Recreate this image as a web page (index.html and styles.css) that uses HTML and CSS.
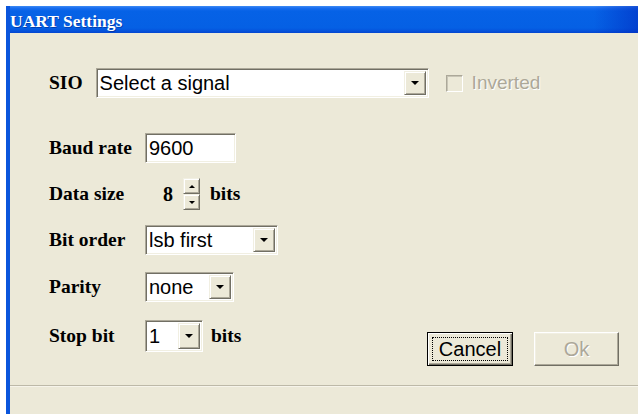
FILE: index.html
```html
<!DOCTYPE html>
<html>
<head>
<meta charset="utf-8">
<title>UART Settings</title>
<link rel="stylesheet" href="styles.css">
</head>
<body>
<div class="window">
  <div class="titlebar"><span class="title">UART Settings</span></div>
  <div class="client">
    <div class="sio-row">
      <span class="label label-sio">SIO</span>
      <div class="combo combo-sio">
        <span class="combo-text">Select a signal</span>
        <span class="combo-btn"><span class="arrow"></span></span>
      </div>
      <div class="check disabled">
        <span class="check-box"></span>
        <span class="check-text">Inverted</span>
      </div>
    </div>

    <div class="form">
      <div class="row">
        <span class="label">Baud rate</span>
        <div class="field field-baud">9600</div>
      </div>
      <div class="row">
        <span class="label">Data size</span>
        <span class="value">8</span>
        <span class="spin">
          <span class="spin-btn"><span class="arrow arrow-up"></span></span>
          <span class="spin-btn"><span class="arrow arrow-small"></span></span>
        </span>
        <span class="unit">bits</span>
      </div>
      <div class="row">
        <span class="label">Bit order</span>
        <div class="combo combo-order">
          <span class="combo-text">lsb first</span>
          <span class="combo-btn"><span class="arrow"></span></span>
        </div>
      </div>
      <div class="row row-parity">
        <span class="label">Parity</span>
        <div class="combo combo-parity">
          <span class="combo-text">none</span>
          <span class="combo-btn"><span class="arrow"></span></span>
        </div>
      </div>
      <div class="row row-stop">
        <div class="stop-field">
          <span class="label">Stop bit</span>
          <div class="combo combo-stop">
            <span class="combo-text">1</span>
            <span class="combo-btn"><span class="arrow"></span></span>
          </div>
          <span class="unit unit-stop">bits</span>
        </div>
        <div class="buttons">
          <button class="btn btn-default"><span class="focus">Cancel</span></button>
          <button class="btn" disabled>Ok</button>
        </div>
      </div>
    </div>
  </div>
  <div class="statusbar"></div>
</div>
</body>
</html>
```

FILE: styles.css
```css
html, body {
  margin: 0;
  padding: 0;
  background: #ffffff;
}

body {
  padding: 6px 0 0 6px;
  width: 638px;
  height: 414px;
  box-sizing: border-box;
  overflow: hidden;
}

.window {
  width: 632px;
  height: 408px;
  display: flex;
  flex-direction: column;
  background: #ece9d8;
  border-left: 4px solid #0a55dc;
  box-sizing: border-box;
}

/* title bar */
.titlebar {
  height: 27px;
  flex: none;
  display: flex;
  align-items: center;
  padding-left: 0;
  background:
    linear-gradient(to right, rgba(0, 40, 190, 0) 0, rgba(0, 40, 190, 0) 93%, rgba(0, 40, 190, 0.55) 100%),
    linear-gradient(to bottom, #3f8cf3 0, #1a6ef0 2px, #0662e6 5px, #0560e4 22px, #0452db 25px, #0346d0 27px);
}

.title {
  font-family: "Liberation Serif", serif;
  font-weight: bold;
  font-size: 17.5px;
  color: #ffffff;
  text-shadow: 1px 1px 0 rgba(0, 20, 110, 0.45);
  margin-top: 4px;
}

/* dialog client area */
.client {
  flex: 1;
  display: flex;
  flex-direction: column;
  padding: 35px 19px 0 39px;
}

.label {
  font-family: "Liberation Serif", serif;
  font-weight: bold;
  font-size: 19.5px;
  color: #000;
  width: 96px;
  flex: none;
  white-space: nowrap;
}

.sio-row {
  display: flex;
  align-items: center;
  height: 30px;
}

.label-sio {
  width: auto;
  margin-right: 13px;
}

/* sunken white field */
.field,
.combo {
  height: 30px;
  box-sizing: border-box;
  background: #ffffff;
  border-style: solid;
  border-width: 1px;
  border-color: #aca899 #ffffff #ffffff #aca899;
  box-shadow: inset 1px 1px 0 #716f64, inset -1px -1px 0 #f1efe2;
  font-family: "Liberation Sans", Arial, sans-serif;
  font-size: 20px;
  color: #000;
  display: flex;
  align-items: center;
}

.field {
  padding-left: 3px;
}

.field-baud {
  width: 91px;
}

.combo {
  padding: 2px 2px 2px 3px;
}

.combo-text {
  flex: 1;
  white-space: nowrap;
  overflow: hidden;
}

.combo-btn {
  flex: none;
  width: 22px;
  align-self: stretch;
  box-sizing: border-box;
  background: #ece9d8;
  border-style: solid;
  border-width: 1px;
  border-color: #f1efe2 #716f64 #716f64 #f1efe2;
  box-shadow: inset 1px 1px 0 #ffffff, inset -1px -1px 0 #aca899;
  display: flex;
  align-items: center;
  justify-content: center;
}

.arrow {
  width: 0;
  height: 0;
  border-left: 4px solid transparent;
  border-right: 4px solid transparent;
  border-top: 4px solid #000;
}

.arrow-small {
  border-left-width: 3px;
  border-right-width: 3px;
  border-top-width: 3px;
}

.arrow-up {
  border-left: 3px solid transparent;
  border-right: 3px solid transparent;
  border-top: 0;
  border-bottom: 3px solid #000;
}

.combo-sio {
  width: 333px;
}

.combo-order {
  width: 133px;
}

.combo-parity {
  width: 89px;
}

.combo-stop {
  width: 58px;
  height: 32px;
}

/* disabled checkbox */
.check {
  display: flex;
  align-items: center;
  margin-left: 17px;
}

.check-box {
  width: 17px;
  height: 17px;
  box-sizing: border-box;
  border-style: solid;
  border-width: 1px;
  border-color: #aca899 #ffffff #ffffff #aca899;
  box-shadow: inset 1px 1px 0 #c8c5b6;
  margin-right: 9px;
}

.check-text {
  font-family: "Liberation Sans", Arial, sans-serif;
  font-size: 19px;
  color: #aca899;
  text-shadow: 1px 1px 0 #ffffff;
}

/* labelled rows */
.form {
  margin-top: 35px;
  display: flex;
  flex-direction: column;
  gap: 16px;
}

.row {
  display: flex;
  align-items: center;
  height: 30px;
}

.row-parity {
  margin-top: 1px;
}

.row-stop {
  margin-top: 2px;
  height: auto;
  align-items: flex-start;
}

.stop-field {
  display: flex;
  align-items: center;
  height: 32px;
}

.value {
  font-family: "Liberation Serif", serif;
  font-weight: bold;
  font-size: 20px;
  margin-left: 18px;
  width: 12px;
}

.spin {
  display: flex;
  flex-direction: column;
  width: 17px;
  height: 32px;
  margin-left: 8px;
}

.spin-btn {
  flex: 1;
  box-sizing: border-box;
  background: #ece9d8;
  border-style: solid;
  border-width: 1px;
  border-color: #f1efe2 #716f64 #716f64 #f1efe2;
  box-shadow: inset 1px 1px 0 #ffffff, inset -1px -1px 0 #aca899;
  display: flex;
  align-items: center;
  justify-content: center;
}

.unit {
  font-family: "Liberation Serif", serif;
  font-weight: bold;
  font-size: 19.5px;
  margin-left: 10px;
}

.unit-stop {
  margin-left: 8px;
}

/* push buttons */
.buttons {
  margin-left: auto;
  margin-top: 12px;
  display: flex;
  gap: 21px;
}

.btn {
  width: 85px;
  height: 34px;
  box-sizing: border-box;
  padding: 0;
  margin: 0;
  background: #ece9d8;
  border-style: solid;
  border-width: 1px;
  border-color: #ffffff #716f64 #716f64 #ffffff;
  box-shadow: inset -1px -1px 0 #aca899, inset 1px 1px 0 #f1efe2;
  font-family: "Liberation Sans", Arial, sans-serif;
  font-size: 20px;
  color: #000;
  display: flex;
  align-items: center;
  justify-content: center;
}

.btn:disabled {
  color: #aca899;
  text-shadow: 1px 1px 0 #ffffff;
}

.btn-default {
  width: 86px;
  border: 1px solid #000;
  box-shadow: inset 1px 1px 0 #ffffff, inset -1px -1px 0 #716f64, inset -2px -2px 0 #aca899;
  padding: 4px;
}

.focus {
  flex: 1;
  align-self: stretch;
  display: flex;
  align-items: center;
  justify-content: center;
  border: 1px dotted #000;
  line-height: 1;
}

/* status strip */
.statusbar {
  height: 28px;
  flex: none;
  border-top: 1px solid #bdb9a8;
  box-shadow: inset 0 1px 0 #f6f4ea;
}
```
